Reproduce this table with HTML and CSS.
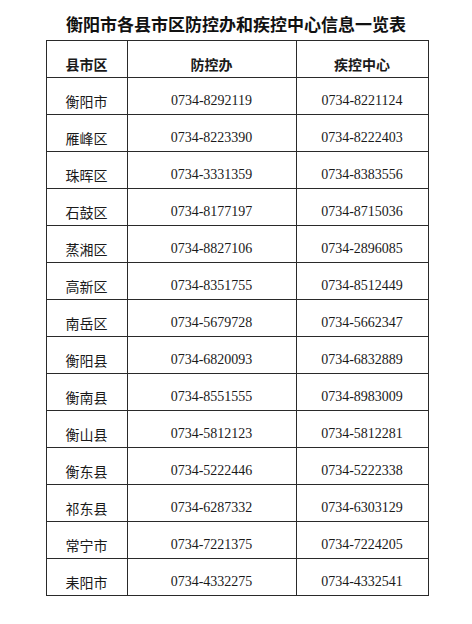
FILE: index.html
```html
<!DOCTYPE html>
<html lang="zh-CN">
<head>
<meta charset="utf-8">
<title>衡阳市各县市区防控办和疾控中心信息一览表</title>
<link rel="stylesheet" href="styles.css">
</head>
<body>
<div class="page">
  <h1 class="title">衡阳市各县市区防控办和疾控中心信息一览表</h1>
  <table class="info">
    <colgroup>
      <col class="c1"><col class="c2"><col class="c3">
    </colgroup>
    <thead>
      <tr><th>县市区</th><th>防控办</th><th>疾控中心</th></tr>
    </thead>
    <tbody>
      <tr><td class="name">衡阳市</td><td>0734-8292119</td><td>0734-8221124</td></tr>
      <tr><td class="name">雁峰区</td><td>0734-8223390</td><td>0734-8222403</td></tr>
      <tr><td class="name">珠晖区</td><td>0734-3331359</td><td>0734-8383556</td></tr>
      <tr><td class="name">石鼓区</td><td>0734-8177197</td><td>0734-8715036</td></tr>
      <tr><td class="name">蒸湘区</td><td>0734-8827106</td><td>0734-2896085</td></tr>
      <tr><td class="name">高新区</td><td>0734-8351755</td><td>0734-8512449</td></tr>
      <tr><td class="name">南岳区</td><td>0734-5679728</td><td>0734-5662347</td></tr>
      <tr><td class="name">衡阳县</td><td>0734-6820093</td><td>0734-6832889</td></tr>
      <tr><td class="name">衡南县</td><td>0734-8551555</td><td>0734-8983009</td></tr>
      <tr><td class="name">衡山县</td><td>0734-5812123</td><td>0734-5812281</td></tr>
      <tr><td class="name">衡东县</td><td>0734-5222446</td><td>0734-5222338</td></tr>
      <tr><td class="name">祁东县</td><td>0734-6287332</td><td>0734-6303129</td></tr>
      <tr><td class="name">常宁市</td><td>0734-7221375</td><td>0734-7224205</td></tr>
      <tr><td class="name">耒阳市</td><td>0734-4332275</td><td>0734-4332541</td></tr>
    </tbody>
  </table>
</div>
</body>
</html>
```

FILE: styles.css
```css
html, body {
  margin: 0;
  padding: 0;
  background: #ffffff;
}

.page {
  width: 472px;
  height: 624px;
  display: flex;
  flex-direction: column;
  align-items: center;
}

.title {
  margin: 0;
  height: 40px;
  box-sizing: border-box;
  padding-top: 14px;
  font-family: "Noto Sans CJK SC", sans-serif;
  font-weight: 700;
  font-size: 17px;
  line-height: 20px;
  color: #111111;
  text-align: center;
}

.info {
  margin-left: 2px;
  border-collapse: collapse;
  border: 1.5px solid #2a2a2a;
  color: #1a1a1a;
}

.c1 { width: 81px; }
.c2 { width: 169px; }
.c3 { width: 132px; }

.info th,
.info td {
  border: 1.5px solid #2a2a2a;
  height: 37px;
  box-sizing: border-box;
  padding: 9px 0 0 0;
  text-align: center;
  vertical-align: middle;
  line-height: 20px;
}

.info th {
  font-family: "Noto Sans CJK SC", sans-serif;
  font-weight: 700;
  font-size: 14px;
}

.info td {
  font-family: "Liberation Serif", serif;
  font-size: 14px;
}

.info td.name {
  font-family: "Noto Sans CJK SC", sans-serif;
  font-weight: 400;
  font-size: 14px;
}
```
